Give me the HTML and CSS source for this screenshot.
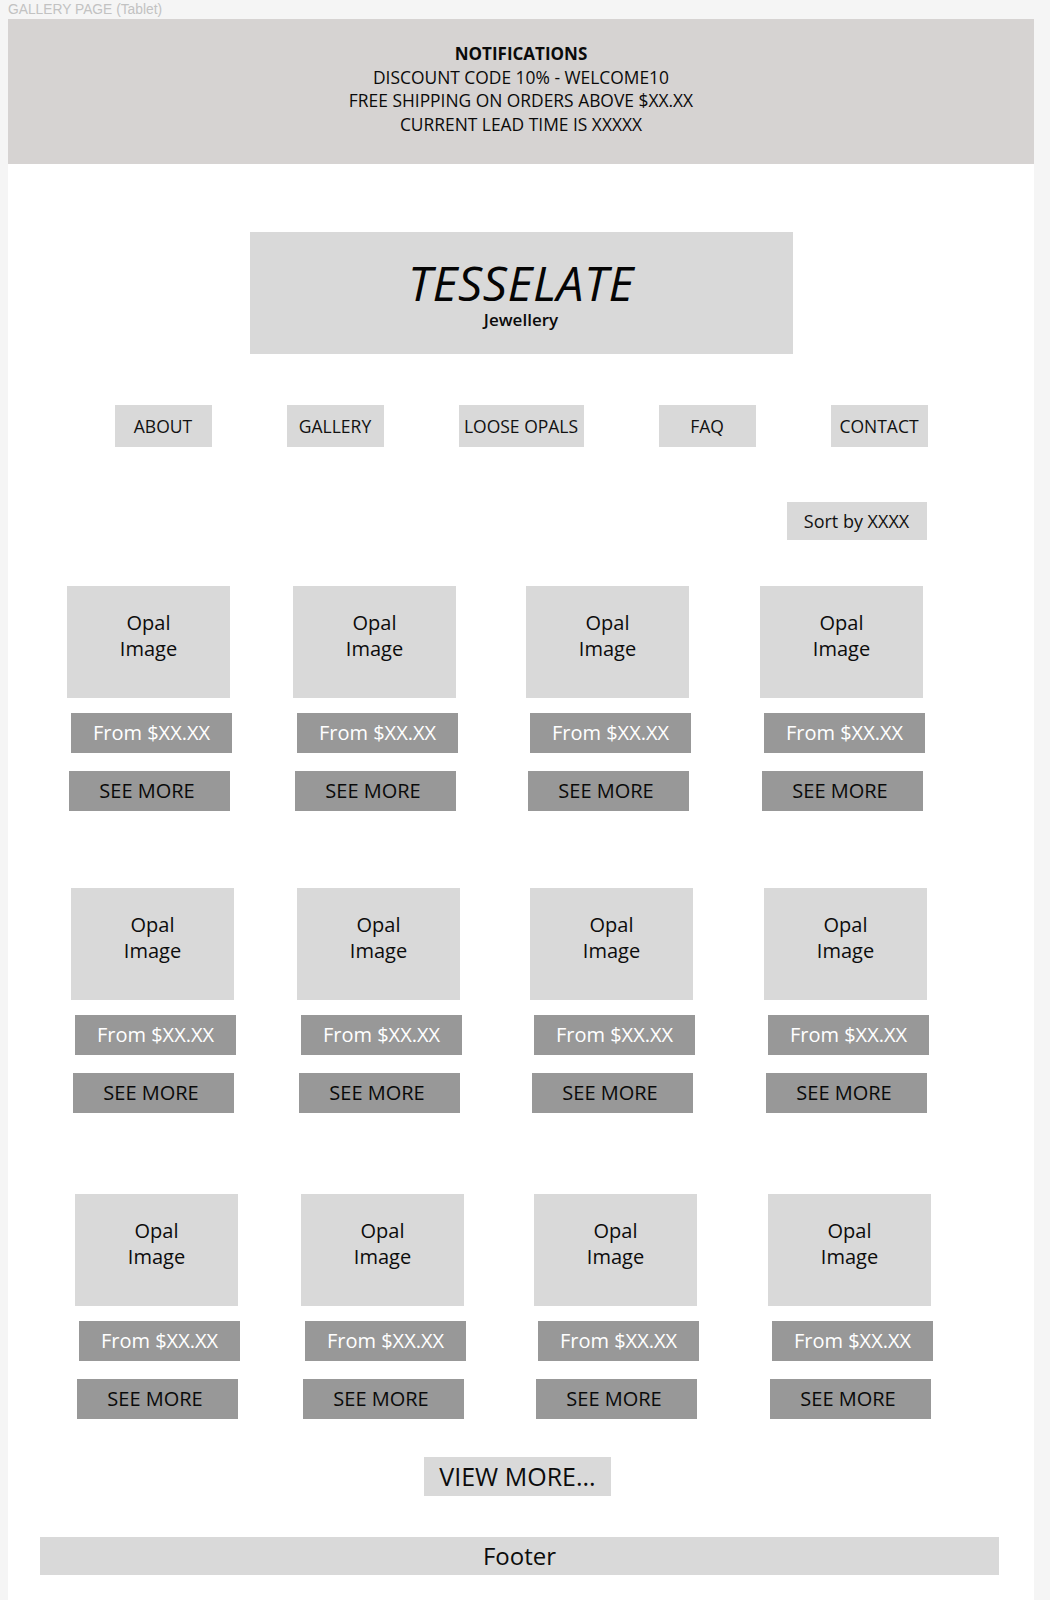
FILE: index.html
```html
<!DOCTYPE html>
<html lang="en">
<head>
<meta charset="utf-8">
<title>Gallery Page (Tablet)</title>
<link rel="stylesheet" href="styles.css">
</head>
<body>
<div class="frame-label">GALLERY PAGE (Tablet)</div>
<div class="artboard">
  <section class="notice">
    <div class="notice-title">NOTIFICATIONS</div>
    <div>DISCOUNT CODE 10% - WELCOME10</div>
    <div>FREE SHIPPING ON ORDERS ABOVE $XX.XX</div>
    <div>CURRENT LEAD TIME IS XXXXX</div>
  </section>

  <header class="logo">
    <div class="logo-name">TESSELATE</div>
    <div class="logo-sub">Jewellery</div>
  </header>

  <nav class="nav">
    <a class="nav-item">ABOUT</a>
    <a class="nav-item">GALLERY</a>
    <a class="nav-item wide">LOOSE OPALS</a>
    <a class="nav-item">FAQ</a>
    <a class="nav-item">CONTACT</a>
  </nav>

  <div class="sort-row">
    <div class="sort">Sort by XXXX</div>
  </div>

  <div class="grid row1">
    <div class="card"><div class="img">Opal<br>Image</div><div class="price">From $XX.XX</div><div class="more">SEE MORE</div></div>
    <div class="card"><div class="img">Opal<br>Image</div><div class="price">From $XX.XX</div><div class="more">SEE MORE</div></div>
    <div class="card"><div class="img">Opal<br>Image</div><div class="price">From $XX.XX</div><div class="more">SEE MORE</div></div>
    <div class="card"><div class="img">Opal<br>Image</div><div class="price">From $XX.XX</div><div class="more">SEE MORE</div></div>
  </div>

  <div class="grid row2">
    <div class="card"><div class="img">Opal<br>Image</div><div class="price">From $XX.XX</div><div class="more">SEE MORE</div></div>
    <div class="card"><div class="img">Opal<br>Image</div><div class="price">From $XX.XX</div><div class="more">SEE MORE</div></div>
    <div class="card"><div class="img">Opal<br>Image</div><div class="price">From $XX.XX</div><div class="more">SEE MORE</div></div>
    <div class="card"><div class="img">Opal<br>Image</div><div class="price">From $XX.XX</div><div class="more">SEE MORE</div></div>
  </div>

  <div class="grid row3">
    <div class="card"><div class="img">Opal<br>Image</div><div class="price">From $XX.XX</div><div class="more">SEE MORE</div></div>
    <div class="card"><div class="img">Opal<br>Image</div><div class="price">From $XX.XX</div><div class="more">SEE MORE</div></div>
    <div class="card"><div class="img">Opal<br>Image</div><div class="price">From $XX.XX</div><div class="more">SEE MORE</div></div>
    <div class="card"><div class="img">Opal<br>Image</div><div class="price">From $XX.XX</div><div class="more">SEE MORE</div></div>
  </div>

  <div class="view-row">
    <div class="view-more">VIEW MORE...</div>
  </div>

  <footer class="footer">Footer</footer>
</div>
</body>
</html>
```

FILE: styles.css
```css
* { box-sizing: border-box; }

html, body {
  margin: 0;
  padding: 0;
  background: #f5f5f5;
}

body {
  font-family: "Open Sans", "Noto Sans", sans-serif;
  color: #0c0c0c;
}

.frame-label {
  height: 19px;
  padding-left: 8px;
  font-family: "Liberation Sans", Arial, sans-serif;
  font-size: 13.8px;
  line-height: 19px;
  color: #c2c2c2;
}

.artboard {
  margin-left: 8px;
  width: 1026px;
  min-height: 1581px;
  background: #ffffff;
  padding-bottom: 23px;
}

/* notifications bar */
.notice {
  height: 145px;
  background: #d6d3d2;
  padding-top: 23px;
  text-align: center;
  font-size: 17.4px;
  line-height: 23.7px;
  color: #0a0a0a;
}
.notice-title { font-weight: 700; font-size: 17px; }

/* logo */
.logo {
  width: 543px;
  height: 122px;
  margin: 68px auto 0;
  background: #d9d9d9;
  padding-top: 26px;
  text-align: center;
}
.logo-name {
  font-style: italic;
  font-size: 48px;
  line-height: 50px;
  letter-spacing: 0.6px;
  color: #050505;
}
.logo-sub {
  padding-top: 2px;
  font-size: 17px;
  font-weight: 600;
  line-height: 20px;
  color: #0a0a0a;
}

/* navigation */
.nav {
  display: flex;
  justify-content: center;
  gap: 75px;
  margin-top: 51px;
}
.nav-item {
  width: 97px;
  height: 42px;
  background: #d9d9d9;
  font-size: 17.5px;
  line-height: 42px;
  text-align: center;
  color: #111;
}
.nav-item.wide { width: 125px; }

/* sort */
.sort-row {
  width: 811px;
  margin: 55px auto 0;
  display: flex;
  justify-content: flex-end;
}
.sort {
  width: 140px;
  height: 38px;
  background: #d9d9d9;
  font-size: 18px;
  line-height: 38px;
  text-align: center;
  color: #111;
}

/* product grid */
.grid {
  display: grid;
  grid-template-columns: 226px 233px 234px 165px;
  width: 858px;
}
.row1 { margin: 46px 0 0 59px; }
.row2 { margin: 77px 0 0 63px; }
.row3 { margin: 81px 0 0 67px; }

.card {
  display: flex;
  flex-direction: column;
}
.img {
  width: 163px;
  height: 112px;
  background: #d9d9d9;
  padding-top: 24px;
  text-align: center;
  font-size: 20px;
  line-height: 26px;
  color: #0c0c0c;
}
.price {
  width: 161px;
  height: 40px;
  margin: 15px 0 0 4px;
  background: #989898;
  color: #ffffff;
  font-size: 20px;
  line-height: 40px;
  text-align: center;
}
.more {
  width: 161px;
  height: 40px;
  margin: 18px 0 0 2px;
  padding-right: 5px;
  background: #989898;
  color: #0a0a0a;
  font-size: 20px;
  line-height: 40px;
  text-align: center;
}

/* view more */
.view-row {
  display: flex;
  justify-content: center;
  margin-top: 38px;
  padding-right: 7px;
}
.view-more {
  width: 187px;
  height: 39px;
  background: #d9d9d9;
  font-size: 25px;
  line-height: 39px;
  text-align: center;
  color: #0c0c0c;
}

/* footer */
.footer {
  width: 959px;
  height: 38px;
  margin: 41px 0 0 32px;
  background: #d9d9d9;
  font-size: 24px;
  line-height: 38px;
  text-align: center;
  color: #0c0c0c;
}
```
